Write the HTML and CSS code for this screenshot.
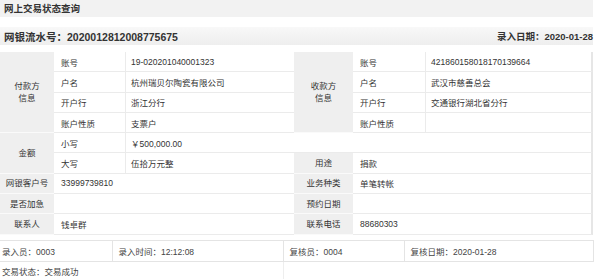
FILE: index.html
```html
<!DOCTYPE html>
<html lang="zh-CN">
<head>
    <meta charset="UTF-8">
    <title>网上交易状态查询</title>
    <link rel="stylesheet" href="styles.css">
</head>
<body>
    <div class="page">
        <div class="title">网上交易状态查询</div>
        <div class="serial">
            <span class="serial-no">网银流水号：2020012812008775675</span>
            <span class="serial-date">录入日期：2020-01-28</span>
        </div>

        <table class="detail">
            <colgroup>
                <col class="c-head">
                <col class="c-sub">
                <col class="c-val">
                <col class="c-head2">
                <col class="c-sub2">
                <col class="c-val2">
            </colgroup>
            <tr>
                <td class="head" rowspan="4">付款方<br>信息</td>
                <td class="sub">账号</td>
                <td class="val">19-020201040001323</td>
                <td class="head" rowspan="4">收款方<br>信息</td>
                <td class="sub">账号</td>
                <td class="val last">421860158018170139664</td>
            </tr>
            <tr>
                <td class="sub">户名</td>
                <td class="val">杭州瑞贝尔陶瓷有限公司</td>
                <td class="sub">户名</td>
                <td class="val last">武汉市慈善总会</td>
            </tr>
            <tr>
                <td class="sub">开户行</td>
                <td class="val">浙江分行</td>
                <td class="sub">开户行</td>
                <td class="val last">交通银行湖北省分行</td>
            </tr>
            <tr>
                <td class="sub">账户性质</td>
                <td class="val">支票户</td>
                <td class="sub">账户性质</td>
                <td class="val last"></td>
            </tr>
            <tr>
                <td class="head" rowspan="2">金额</td>
                <td class="sub">小写</td>
                <td class="val last" colspan="4">￥500,000.00</td>
            </tr>
            <tr>
                <td class="sub">大写</td>
                <td class="val">伍拾万元整</td>
                <td class="head">用途</td>
                <td class="val wide last" colspan="2">捐款</td>
            </tr>
            <tr>
                <td class="head">网银客户号</td>
                <td class="val wide" colspan="2">33999739810</td>
                <td class="head">业务种类</td>
                <td class="val wide last" colspan="2">单笔转帐</td>
            </tr>
            <tr>
                <td class="head">是否加急</td>
                <td class="val wide" colspan="2"></td>
                <td class="head">预约日期</td>
                <td class="val wide last" colspan="2"></td>
            </tr>
            <tr>
                <td class="head">联系人</td>
                <td class="val wide" colspan="2">钱卓群</td>
                <td class="head">联系电话</td>
                <td class="val wide last" colspan="2">88680303</td>
            </tr>
        </table>

        <table class="audit">
            <colgroup>
                <col class="a1">
                <col class="a2">
                <col class="a3">
                <col class="a4">
            </colgroup>
            <tr class="audit-row">
                <td class="first">录入员：0003</td>
                <td>录入时间：12:12:08</td>
                <td>复核员：0004</td>
                <td class="end">复核日期：2020-01-28</td>
            </tr>
            <tr class="status-row">
                <td class="first" colspan="2">交易状态：交易成功</td>
                <td colspan="2"></td>
            </tr>
        </table>
    </div>
</body>
</html>
```

FILE: styles.css
```css
body {
    margin: 0;
    background-color: #fff;
    color: #333;
    font-family: "Liberation Sans", Arial, "Noto Sans CJK SC", sans-serif;
}
.page {
    width: 593px;
}
.title {
    height: 17px;
    line-height: 17px;
    padding-left: 4px;
    background-color: #f2f2f2;
    font-size: 9.5px;
    font-weight: bold;
}
.serial {
    display: flex;
    justify-content: space-between;
    align-items: center;
    height: 18px;
    margin-top: 10px;
    padding-left: 4px;
    background: linear-gradient(#f8f8f8, #eeeeee);
    font-weight: bold;
}
.serial-no {
    font-size: 10.5px;
}
.serial-date {
    font-size: 9.5px;
}

/* detail table */
.detail {
    width: 593px;
    margin-top: 7px;
    table-layout: fixed;
    border-collapse: separate;
    border-spacing: 0;
    font-size: 8.5px;
}
.c-head { width: 54px; }
.c-sub { width: 72px; }
.c-val { width: 168px; }
.c-head2 { width: 59px; }
.c-sub2 { width: 73px; }
.c-val2 { width: 167px; }
.detail td {
    box-sizing: border-box;
    height: 20.3px;
    padding: 0 0 0 7px;
    border-bottom: 1px solid #ebebeb;
    white-space: nowrap;
}
.detail td.head {
    padding: 0;
    background-color: #efefef;
    border-bottom-color: #fafafa;
    text-align: center;
    line-height: 12px;
}
.detail td.sub {
    border-right: 1px solid #ebebeb;
}
.detail td.val {
    padding-left: 5px;
}
.detail td.wide {
    padding-left: 7px;
}
.detail td.last {
    border-right: 2px solid #e6e6e6;
}

/* audit table */
.audit {
    width: 593px;
    margin-top: 5px;
    table-layout: fixed;
    border-collapse: collapse;
    font-size: 8.5px;
    color: #444;
}
.a1 { width: 112px; }
.a2 { width: 171px; }
.a3 { width: 121px; }
.a4 { width: 189px; }
.audit td {
    padding: 0 0 0 6px;
    white-space: nowrap;
}
.audit-row td {
    height: 20px;
    border: 1px solid #e4e4e4;
    border-left-color: #eeeeee;
}
.audit-row td.first {
    border-left: none;
}
.audit td.first {
    padding-left: 2px;
}
.status-row td {
    height: 19px;
    border-left: 1px solid #eeeeee;
}
.status-row td.first {
    border-left: none;
}
```
